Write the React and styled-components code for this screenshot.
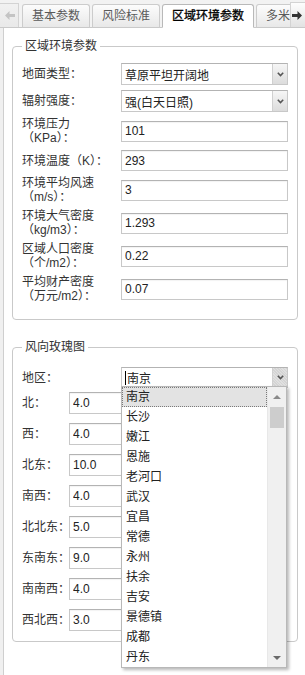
import React from "react";
import styled, { createGlobalStyle } from "styled-components";

const GlobalStyle = createGlobalStyle`
  html, body {
    margin: 0;
    padding: 0;
    background: #f0f0f0;
  }
  body {
    font-family: "Liberation Sans", "Noto Sans CJK SC", sans-serif;
    font-size: 12px;
    color: #333;
  }
  * {
    box-sizing: border-box;
  }
`;

const tabs = ["基本参数", "风险标准", "区域环境参数", "多米诺效应"];

const envRows = [
  { label: "地面类型：", value: "草原平坦开阔地", select: true },
  { label: "辐射强度：", value: "强(白天日照)", select: true },
  { label: "环境压力（KPa）：", value: "101" },
  { label: "环境温度（K）：", value: "293" },
  { label: "环境平均风速（m/s）：", value: "3" },
  { label: "环境大气密度（kg/m3）：", value: "1.293" },
  { label: "区域人口密度（个/m2）：", value: "0.22" },
  { label: "平均财产密度（万元/m2）：", value: "0.07" },
];

const windRows = [
  { label: "北：", value: "4.0" },
  { label: "西：", value: "4.0" },
  { label: "北东：", value: "10.0" },
  { label: "南西：", value: "4.0" },
  { label: "北北东：", value: "5.0" },
  { label: "东南东：", value: "9.0" },
  { label: "南南西：", value: "4.0" },
  { label: "西北西：", value: "3.0" },
];

const cities = [
  "南京", "长沙", "嫩江", "恩施", "老河口", "武汉", "宜昌",
  "常德", "永州", "扶余", "吉安", "景德镇", "成都", "丹东",
];

const Chevron = () => (
  <svg width="7" height="5" viewBox="0 0 7 5">
    <path d="M0.8 0.8 L3.5 3.5 L6.2 0.8" fill="none" stroke="#555" strokeWidth="1.6" />
  </svg>
);

const ArrowIcon = ({ dir, color }) => (
  <svg width="10" height="9" viewBox="0 0 10 9">
    <path
      d={
        dir === "left"
          ? "M0 4.5 L4.5 0 L4.5 3 L10 3 L10 6 L4.5 6 L4.5 9 Z"
          : "M10 4.5 L5.5 0 L5.5 3 L0 3 L0 6 L5.5 6 L5.5 9 Z"
      }
      fill={color}
    />
  </svg>
);

const Combo = ({ value, pressed, caret, children }) => (
  <ComboBox $h={pressed ? 21 : 22}>
    <ComboText>
      {caret && <Caret />}
      {value}
    </ComboText>
    <ComboButton $pressed={pressed}>
      <Chevron />
    </ComboButton>
    {children}
  </ComboBox>
);

const App = () => {
  return (
    <Page>
      <GlobalStyle />
      <TabStrip>
        <ScrollButton $side="left">
          <ArrowIcon dir="left" color="#c4c4c4" />
        </ScrollButton>
        <TabList>
          {tabs.map((t) => (
            <Tab key={t} $active={t === "区域环境参数"}>
              {t}
            </Tab>
          ))}
        </TabList>
        <ScrollButton $side="right">
          <ArrowIcon dir="right" color="#333" />
        </ScrollButton>
      </TabStrip>

      <Panel>
        <Group $top={10} $bottom={16} $gap={20}>
          <Legend>区域环境参数</Legend>
          <Rows $gap={5}>
            {envRows.map((r) => (
              <Row key={r.label} $labelWidth={99}>
                <Label>{r.label}</Label>
                {r.select ? (
                  <Combo value={r.value} />
                ) : (
                  <Field readOnly value={r.value} />
                )}
              </Row>
            ))}
          </Rows>
        </Group>

        <Group $top={13} $bottom={10}>
          <Legend>风向玫瑰图</Legend>
          <Row $labelWidth={99}>
            <Label>地区：</Label>
            <Combo value="南京" pressed caret>
              <DropList>
                <Items>
                  {cities.map((c, i) => (
                    <Item key={c} $selected={i === 0}>
                      {c}
                    </Item>
                  ))}
                </Items>
                <ScrollTrack>
                  <TrackButton>
                    <Triangle $up />
                  </TrackButton>
                  <Thumb />
                  <TrackSpace />
                  <TrackButton>
                    <Triangle />
                  </TrackButton>
                </ScrollTrack>
              </DropList>
            </Combo>
          </Row>
          <Rows $gap={9} $top={4}>
            {windRows.map((r) => (
              <Row key={r.label} $labelWidth={47}>
                <Label $nowrap>{r.label}</Label>
                <Field readOnly value={r.value} $h={22} $maxWidth={150} />
              </Row>
            ))}
          </Rows>
        </Group>
      </Panel>
    </Page>
  );
};

const Page = styled.div`
  width: 305px;
  height: 675px;
  overflow: hidden;
  display: flex;
  flex-direction: column;
`;

const TabStrip = styled.div`
  display: flex;
  align-items: flex-end;
  height: 28px;
  flex-shrink: 0;
  background: #f2f2f2;
  border-bottom: 1px solid #c9c9c9;
`;

const ScrollButton = styled.div`
  flex: 0 0 ${(p) => (p.$side === "left" ? 19 : 15)}px;
  height: ${(p) => (p.$side === "left" ? 24 : 25)}px;
  display: flex;
  align-items: center;
  justify-content: center;
  background: ${(p) =>
    p.$side === "left"
      ? "linear-gradient(#f1f1f1, #e9e9e9)"
      : "linear-gradient(#fdfdfd, #e2e2e2)"};
  border: 1px solid #d3d3d3;
  border-${(p) => (p.$side === "left" ? "left" : "right")}: none;
  border-bottom: none;
  padding-${(p) => (p.$side === "left" ? "left" : "right")}: 2px;
`;

const TabList = styled.div`
  flex: 1;
  display: flex;
  align-items: flex-end;
  gap: 2px;
  padding-left: 3px;
  overflow: hidden;
  margin-bottom: -1px;
  height: 26px;
`;

const Tab = styled.div`
  flex-shrink: 0;
  height: 24px;
  padding: 0 9px;
  line-height: 22px;
  white-space: nowrap;
  font-size: 12px;
  border: 1px solid ${(p) => (p.$active ? "#b9b9b9" : "#cccccc")};
  border-bottom-color: ${(p) => (p.$active ? "#ffffff" : "#c9c9c9")};
  border-radius: 3px 3px 0 0;
  background: ${(p) =>
    p.$active ? "#ffffff" : "linear-gradient(#fcfcfc, #e8e8e8)"};
  color: ${(p) => (p.$active ? "#000" : "#5a5a5a")};
  -webkit-text-stroke: ${(p) => (p.$active ? "0.3px #000" : "0")};
`;

const Panel = styled.div`
  flex: 1;
  margin-left: 3px;
  padding: 11px 7px 0 8px;
  background: #ffffff;
  border-left: 1px solid #cfcfcf;
`;

const Group = styled.fieldset`
  margin: 0 0 ${(p) => p.$gap || 0}px;
  padding: ${(p) => p.$top}px 9px ${(p) => p.$bottom}px;
  border: 1px solid #c9c9c9;
  border-radius: 4px;
  min-width: 0;
`;

const Legend = styled.legend`
  padding: 0 3px;
  line-height: 14px;
  font-size: 12px;
  color: #333;
`;

const Rows = styled.div`
  display: flex;
  flex-direction: column;
  gap: ${(p) => p.$gap}px;
  margin-top: ${(p) => p.$top || 0}px;
`;

const Row = styled.div`
  display: grid;
  grid-template-columns: ${(p) => p.$labelWidth}px 1fr;
  align-items: center;
`;

const Label = styled.div`
  line-height: 14px;
  padding-right: 5px;
  color: #333;
  white-space: ${(p) => (p.$nowrap ? "nowrap" : "normal")};
`;

const Field = styled.input`
  display: block;
  width: 100%;
  max-width: ${(p) => (p.$maxWidth ? `${p.$maxWidth}px` : "none")};
  height: ${(p) => p.$h || 21}px;
  margin: 0;
  padding: 0 3px;
  font-family: "Liberation Sans", "Noto Sans CJK SC", sans-serif;
  font-size: 12px;
  color: #222;
  background: #fff;
  border: 1px solid #c8c8c8;
  border-top-color: #b3b3b3;
  box-shadow: inset 0 1px 1px rgba(0, 0, 0, 0.05);
  outline: none;
`;

const ComboBox = styled.div`
  position: relative;
  display: flex;
  height: ${(p) => p.$h}px;
  background: #fff;
  border: 1px solid #c8c8c8;
  border-top-color: #b3b3b3;
`;

const ComboText = styled.div`
  flex: 1;
  display: flex;
  align-items: center;
  padding-left: 3px;
  color: #222;
  white-space: nowrap;
  overflow: hidden;
`;

const Caret = styled.span`
  display: inline-block;
  width: 1px;
  height: 14px;
  background: #000;
  margin-right: 1px;
`;

const ComboButton = styled.div`
  flex: 0 0 15px;
  display: flex;
  align-items: center;
  justify-content: center;
  border-left: 1px solid #d0d0d0;
  background: ${(p) =>
    p.$pressed
      ? "repeating-linear-gradient(45deg, #d4d4d4 0 1px, #e0e0e0 1px 2px)"
      : "linear-gradient(#f6f6f6, #dcdcdc)"};
`;

const DropList = styled.div`
  position: absolute;
  top: calc(100% - 1px);
  left: -1px;
  right: 0;
  height: 282px;
  z-index: 10;
  display: flex;
  background: #fff;
  border: 1px solid #b8b8b8;
  box-shadow: 2px 2px 3px rgba(0, 0, 0, 0.28);
`;

const Items = styled.div`
  flex: 1;
  display: flex;
  flex-direction: column;
`;

const Item = styled.div`
  height: 20px;
  line-height: 18px;
  padding-left: 3px;
  color: #222;
  border: 1px ${(p) => (p.$selected ? "dotted #7a7a7a" : "solid transparent")};
  background: ${(p) => (p.$selected ? "#e3e3e3" : "transparent")};
`;

const ScrollTrack = styled.div`
  flex: 0 0 19px;
  display: flex;
  flex-direction: column;
  background: #f0f0f0;
  border-left: 1px solid #e8e8e8;
`;

const TrackButton = styled.div`
  height: 19px;
  display: flex;
  align-items: center;
  justify-content: center;
`;

const Triangle = styled.div`
  width: 0;
  height: 0;
  border-left: 4px solid transparent;
  border-right: 4px solid transparent;
  ${(p) =>
    p.$up ? "border-bottom: 4px solid #8a8a8a;" : "border-top: 4px solid #6a6a6a;"}
`;

const Thumb = styled.div`
  height: 21px;
  margin: 1px 2px 0;
  background: #cdcdcd;
`;

const TrackSpace = styled.div`
  flex: 1;
`;

export default App;
